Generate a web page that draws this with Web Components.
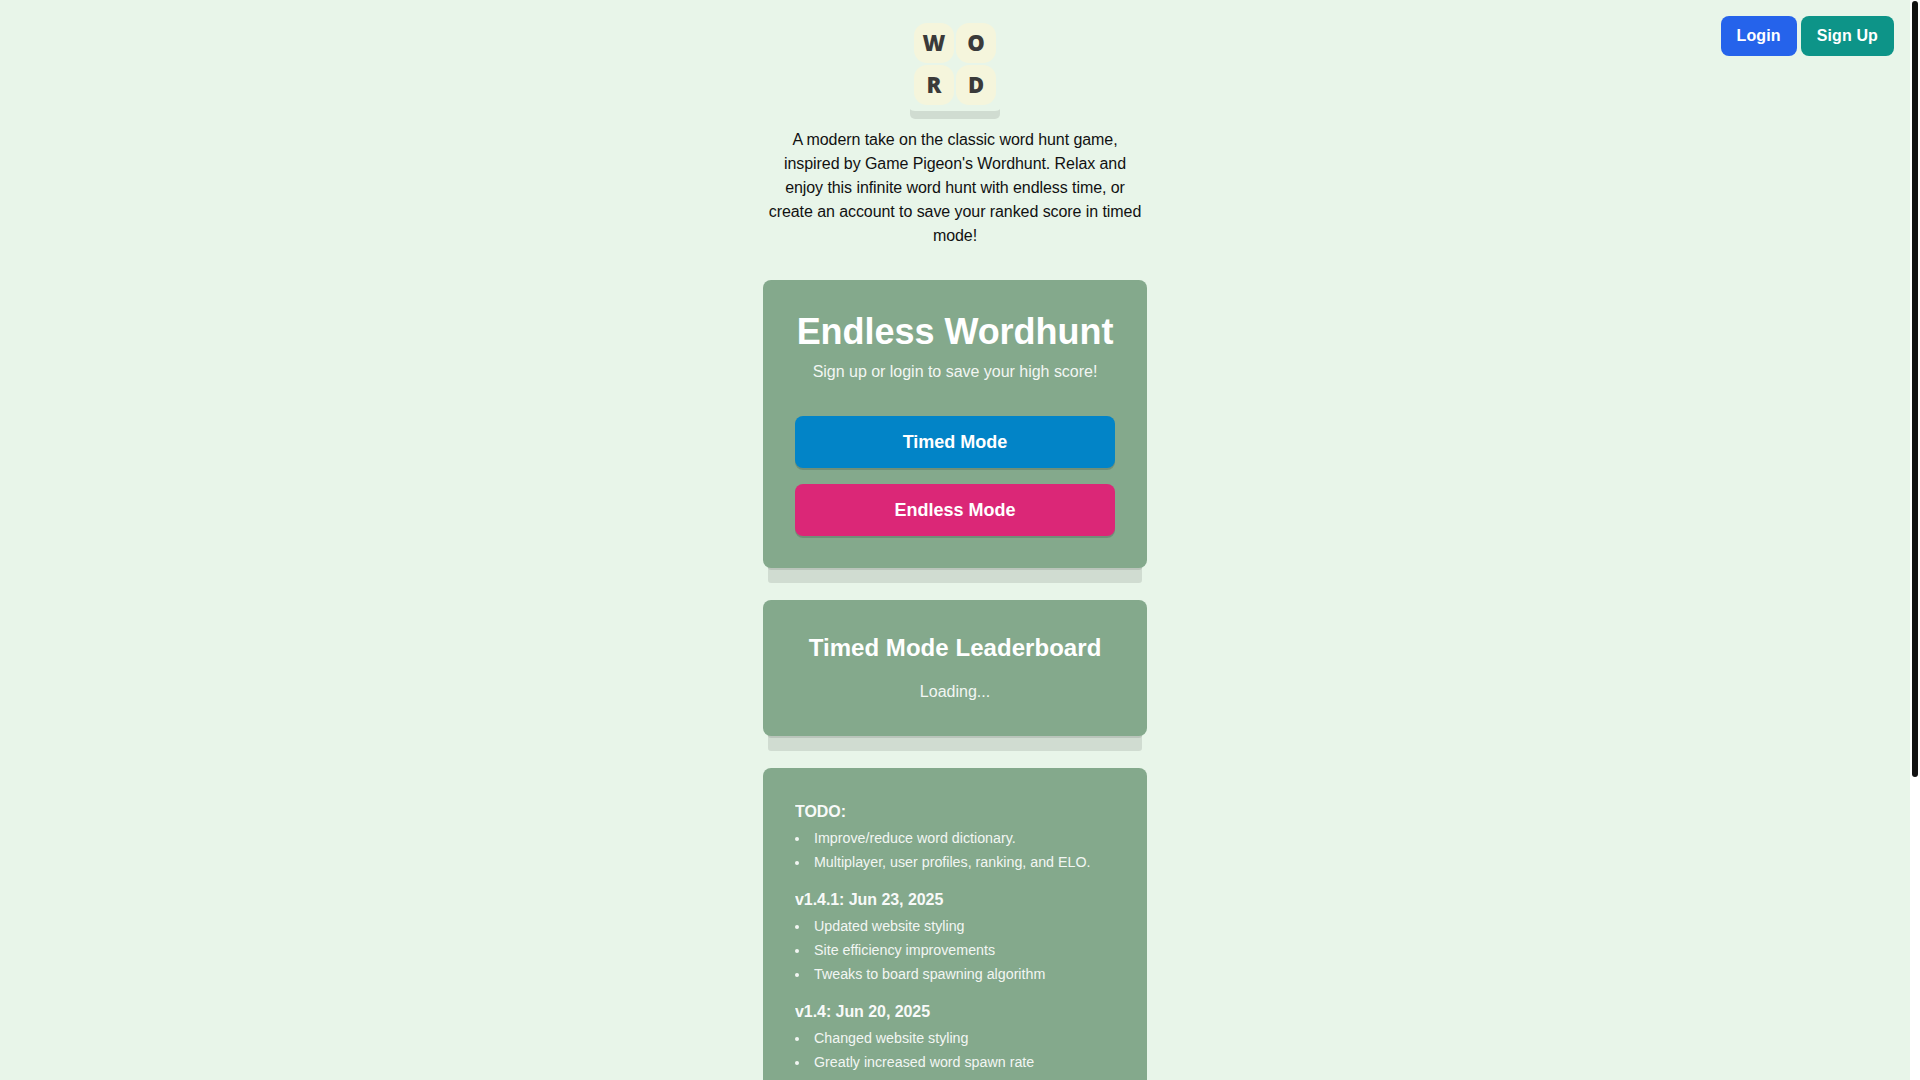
<!DOCTYPE html>
<html lang="en">
<head>
<meta charset="utf-8">
<title>Word Hunt</title>
<style>
  html, body { margin: 0; height: 100%; background: #e8f5e9; }
  body { font-family: "Liberation Sans", Arial, sans-serif; overflow: hidden; }
</style>
</head>
<body>
<word-app>
  <nav-actions slot="actions">
    <pill-link color="#2563eb">Login</pill-link>
    <pill-link color="#0d9488">Sign Up</pill-link>
  </nav-actions>
  <word-logo letters="WORD"></word-logo>
  <intro-text>A modern take on the classic word hunt game, inspired by Game Pigeon's Wordhunt. Relax and enjoy this infinite word hunt with endless time, or create an account to save your ranked score in timed mode!</intro-text>
  <panel-card>
    <hero-head title="Endless Wordhunt" sub="Sign up or login to save your high score!"></hero-head>
    <mode-button color="#0284c7">Timed Mode</mode-button>
    <mode-button color="#db2777">Endless Mode</mode-button>
  </panel-card>
  <panel-card>
    <board-head title="Timed Mode Leaderboard" status="Loading..."></board-head>
  </panel-card>
  <panel-card>
    <log-section heading="TODO:">
      <log-item>Improve/reduce word dictionary.</log-item>
      <log-item>Multiplayer, user profiles, ranking, and ELO.</log-item>
    </log-section>
    <log-section heading="v1.4.1: Jun 23, 2025">
      <log-item>Updated website styling</log-item>
      <log-item>Site efficiency improvements</log-item>
      <log-item>Tweaks to board spawning algorithm</log-item>
    </log-section>
    <log-section heading="v1.4: Jun 20, 2025">
      <log-item>Changed website styling</log-item>
      <log-item>Greatly increased word spawn rate</log-item>
    </log-section>
  </panel-card>
</word-app>
<script>
  const SANS = '"Liberation Sans", Arial, sans-serif';
  function define(name, css, html, setup) {
    customElements.define(name, class extends HTMLElement {
      constructor() {
        super();
        const root = this.attachShadow({ mode: "open" });
        root.innerHTML = "<style>" + css + "</style>" + html;
      }
      connectedCallback() { if (setup) setup(this, this.shadowRoot); }
    });
  }

  define("word-app",
    `:host { display: flex; height: 100vh; overflow: hidden; color: #000; font-family: ${SANS}; }
     .scroller { flex: 1; min-width: 0; overflow: hidden; display: grid; grid-template-columns: 1fr 384px 1fr; align-items: start; }
     main { grid-column: 2; display: flex; flex-direction: column; align-items: stretch; padding: 15px 0 32px; }
     aside { grid-column: 3; display: flex; justify-content: flex-end; align-items: flex-start; padding: 16px 16px 0 0; }
     .rail { flex: 0 0 10px; box-sizing: border-box; padding: 1px 2px 0; background: #fff; }
     .thumb { height: 776px; border-radius: 3px; background: #111; }`,
    `<div class="scroller"><main><slot></slot></main><aside><slot name="actions"></slot></aside></div>
     <div class="rail"><div class="thumb"></div></div>`);

  define("nav-actions", `:host { display: flex; gap: 4px; }`, `<slot></slot>`);

  define("pill-link",
    `:host { display: block; padding: 8px 16px; border-radius: 8px; background: var(--c); color: #fff;
             font: bold 16px/24px ${SANS}; letter-spacing: .12px; }`,
    `<slot></slot>`,
    (el) => el.style.setProperty("--c", el.getAttribute("color")));

  define("word-logo",
    `:host { display: block; box-sizing: border-box; width: 96px; height: 96px; margin: 0 auto; padding-top: 8px;
             border-radius: 8px; box-shadow: 0 11px 0 -3px rgba(0,0,0,.1); }
     .grid { display: grid; grid-template-columns: 39.5px 39.5px; grid-auto-rows: 39.5px; gap: 2.5px; justify-content: center; }
     .tile { display: flex; align-items: center; justify-content: center; padding-bottom: 2px; box-sizing: border-box;
             border-radius: 13px; background: #f5f5dc; color: #3a3a3a;
             font: 800 22px/1 "Open Sans", "Noto Sans", sans-serif; }`,
    `<div class="grid"></div>`,
    (el, root) => {
      const grid = root.querySelector(".grid");
      if (grid.children.length) return;
      for (const ch of el.getAttribute("letters")) {
        const t = document.createElement("div");
        t.className = "tile";
        t.textContent = ch;
        grid.appendChild(t);
      }
    });

  define("intro-text",
    `:host { display: block; margin: 17px 0 32px; text-align: center; font-size: 16px; line-height: 24px; color: #111; letter-spacing: -.07px; }`,
    `<slot></slot>`);

  define("panel-card",
    `:host { display: block; padding: 32px; border-radius: 8px; background: #84a98c; color: #fff;
             box-shadow: 0 20px 0 -5px rgba(0,0,0,.1), 0 7px 0 -5px rgba(0,0,0,.1); }
     :host(:not(:last-child)) { margin-bottom: 32px; }`,
    `<slot></slot>`);

  define("hero-head",
    `:host { display: block; text-align: center; margin-bottom: 32px; }
     h1 { margin: 0; font: bold 36px/40px ${SANS}; letter-spacing: -.04px; }
     p { margin: 8px 0 0; font-size: 16px; line-height: 24px; opacity: .9; letter-spacing: -.02px; }`,
    `<h1></h1><p></p>`,
    (el, root) => {
      root.querySelector("h1").textContent = el.getAttribute("title");
      root.querySelector("p").textContent = el.getAttribute("sub");
      el.removeAttribute("title");
    });

  define("mode-button",
    `:host { display: block; padding: 12px 16px; border-radius: 8px; background: var(--c); color: #fff; text-align: center;
             font: bold 18px/28px ${SANS}; box-shadow: 0 2px 0 rgba(0,0,0,.15); }
     :host(:not(:last-child)) { margin-bottom: 16px; }`,
    `<slot></slot>`,
    (el) => el.style.setProperty("--c", el.getAttribute("color")));

  define("board-head",
    `:host { display: block; text-align: center; }
     h2 { margin: 0; font: bold 24px/32px ${SANS}; letter-spacing: .05px; }
     p { margin: 16px 0 0; font-size: 16px; line-height: 24px; opacity: .9; }`,
    `<h2></h2><p></p>`,
    (el, root) => {
      root.querySelector("h2").textContent = el.getAttribute("title");
      root.querySelector("p").textContent = el.getAttribute("status");
      el.removeAttribute("title");
    });

  define("log-section",
    `:host { display: block; margin-bottom: 16px; }
     h3 { margin: 0 0 4px; font: bold 16px/24px ${SANS}; opacity: .95; letter-spacing: -.06px; }
     .items { display: flex; flex-direction: column; gap: 4px; }`,
    `<h3></h3><div class="items" role="list"><slot></slot></div>`,
    (el, root) => { root.querySelector("h3").textContent = el.getAttribute("heading"); });

  define("log-item",
    `:host { display: flex; align-items: center; gap: 15px; font-size: 14.25px; line-height: 20px; opacity: .9; }
     i { flex: none; width: 4px; height: 4px; margin-top: 2px; border-radius: 50%; background: #fff; }`,
    `<i></i><span><slot></slot></span>`);
</script>
</body>
</html>
